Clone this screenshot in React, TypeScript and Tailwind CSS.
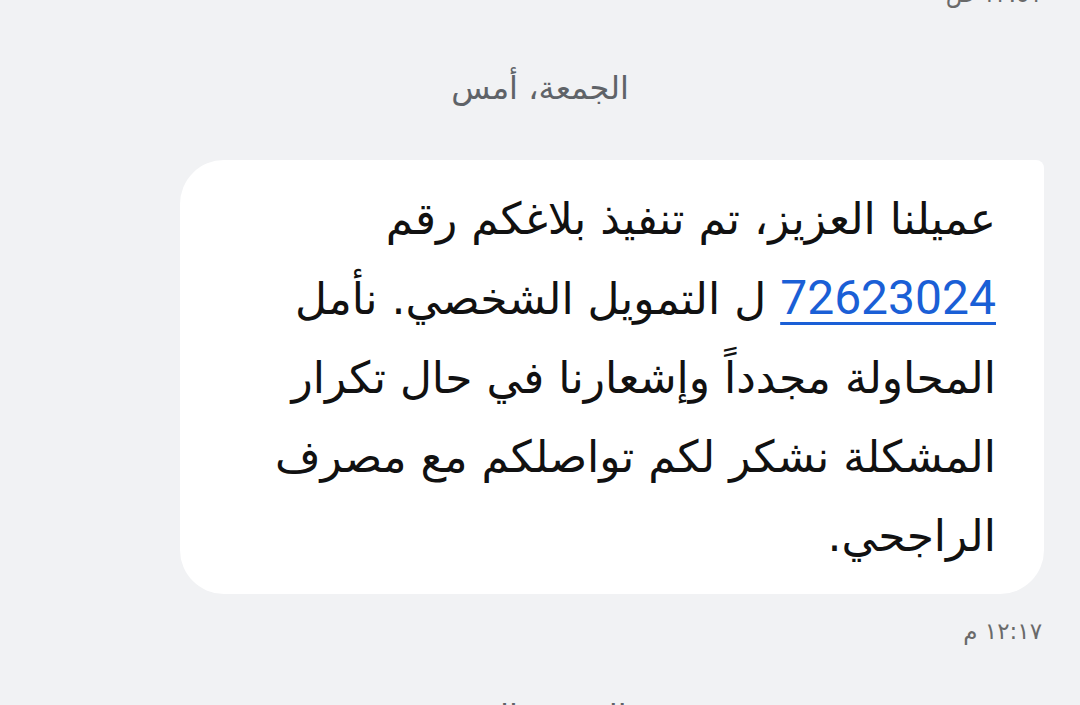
export default function App() {
  const arabic = { fontFamily: '"DejaVu Sans", "Noto Sans", sans-serif' };
  return (
    <div
      dir="rtl"
      className="h-[705px] w-[1080px] overflow-hidden bg-[#f1f2f4]"
      style={arabic}
    >
      <div className="flex flex-col">
        {/* previous message time, scrolled off the top */}
        <div className="-mt-[22px] pr-[38px] text-[24px] leading-[32px] text-[#6a6a6a]">
          ١٢:٥١ ص
        </div>

        <div className="mt-[58px] flex justify-center text-[32px] leading-[40px] text-[#5f6368]">
          الجمعة، أمس
        </div>

        <div className="mt-[52px] mr-[36px] ml-[180px] rounded-tr-[8px] rounded-tl-[44px] rounded-br-[44px] rounded-bl-[44px] bg-white pt-[19px] pr-[48px] pb-[19px] text-[44px] leading-[79px] text-[#111]">
          <div>عميلنا العزيز، تم تنفيذ بلاغكم رقم</div>
          <div>
            <span
              className="text-[48px] text-[#1a5fd6] underline decoration-[3px] underline-offset-[8px]"
              style={{ fontFamily: 'Roboto, sans-serif' }}
            >
              72623024
            </span>{' '}
            ل التمويل الشخصي. نأمل
          </div>
          <div>المحاولة مجدداً وإشعارنا في حال تكرار</div>
          <div>المشكلة نشكر لكم تواصلكم مع مصرف</div>
          <div>الراجحي.</div>
        </div>

        <div className="mt-[17px] pr-[38px] text-[23px] leading-[40px] text-[#6a6a6a]">
          ١٢:١٧ م
        </div>

        <div className="mt-[45px] flex justify-center text-[32px] leading-[40px] text-[#5f6368]">
          السبت، اليوم
        </div>
      </div>
    </div>
  );
}
